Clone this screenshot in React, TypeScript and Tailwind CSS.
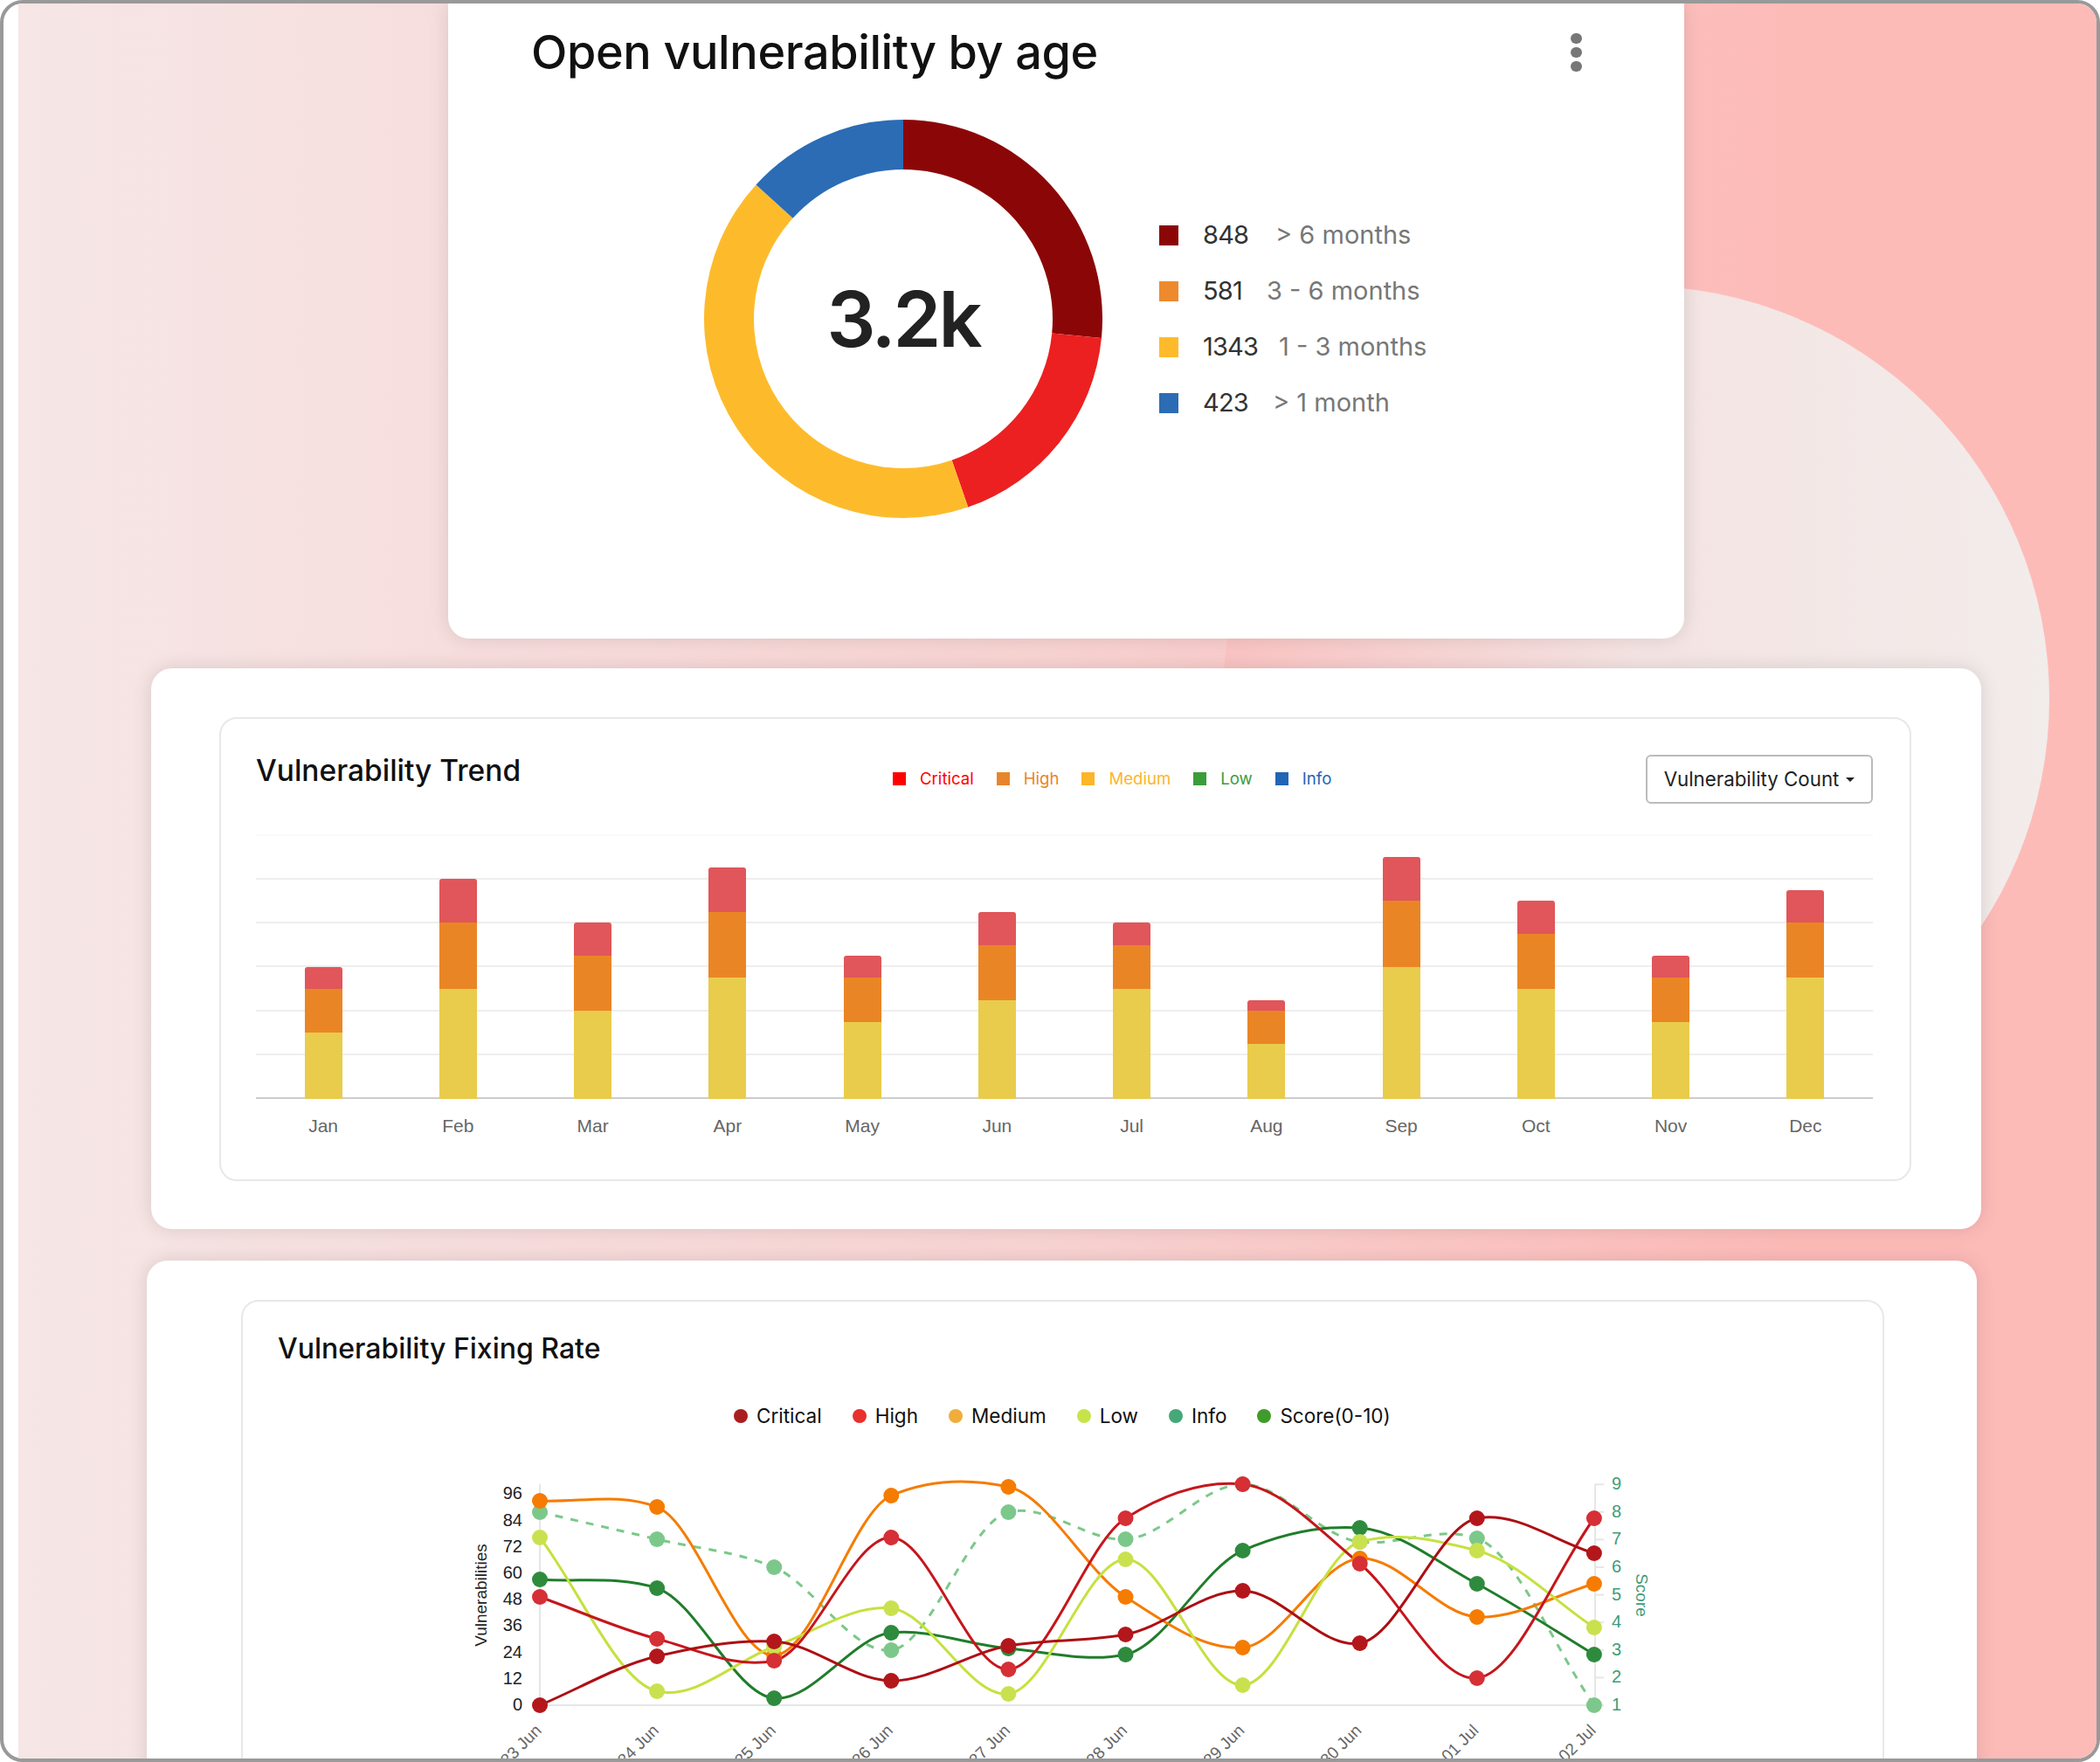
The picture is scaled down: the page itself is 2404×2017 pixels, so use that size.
const ageData = [
  { count: 848, label: "> 6 months", color: "#8b0707", swatch: "bg-[#8b0707]", countWidth: "w-[83px]" },
  { count: 581, label: "3 - 6 months", color: "#ec2020", swatch: "bg-[#ee8a2e]", countWidth: "w-[73px]" },
  { count: 1343, label: "1 - 3 months", color: "#fdbb2c", swatch: "bg-[#fdbb2c]", countWidth: "w-[87px]" },
  { count: 423, label: "> 1 month", color: "#2b6cb5", swatch: "bg-[#2b6cb5]", countWidth: "w-[80px]" },
];

const trendLegend = [
  { name: "Critical", swatch: "bg-[#ff0000]", text: "text-[#ff0000]" },
  { name: "High", swatch: "bg-[#e8852a]", text: "text-[#e8852a]" },
  { name: "Medium", swatch: "bg-[#fdb52a]", text: "text-[#fdb52a]" },
  { name: "Low", swatch: "bg-[#3a9d3a]", text: "text-[#3a9d3a]" },
  { name: "Info", swatch: "bg-[#2165b5]", text: "text-[#2165b5]" },
];

// yellow, orange, red stacked heights in half grid steps
const trendBars = [
  { month: "Jan", y: 3, o: 2, r: 1 },
  { month: "Feb", y: 5, o: 3, r: 2 },
  { month: "Mar", y: 4, o: 2.5, r: 1.5 },
  { month: "Apr", y: 5.5, o: 3, r: 2 },
  { month: "May", y: 3.5, o: 2, r: 1 },
  { month: "Jun", y: 4.5, o: 2.5, r: 1.5 },
  { month: "Jul", y: 5, o: 2, r: 1 },
  { month: "Aug", y: 2.5, o: 1.5, r: 0.5 },
  { month: "Sep", y: 6, o: 3, r: 2 },
  { month: "Oct", y: 5, o: 2.5, r: 1.5 },
  { month: "Nov", y: 3.5, o: 2, r: 1 },
  { month: "Dec", y: 5.5, o: 2.5, r: 1.5 },
];

const fixingLegend = [
  { name: "Critical", dot: "bg-[#a91f1f]" },
  { name: "High", dot: "bg-[#e8302c]" },
  { name: "Medium", dot: "bg-[#f0ad3c]" },
  { name: "Low", dot: "bg-[#c6e44a]" },
  { name: "Info", dot: "bg-[#45a878]" },
  { name: "Score(0-10)", dot: "bg-[#3f9b2a]" },
];

const days = ["23 Jun", "24 Jun", "25 Jun", "26 Jun", "27 Jun", "28 Jun", "29 Jun", "30 Jun", "01 Jul", "02 Jul"];
const dayX = days.map((_, i) => 618 + 134.1 * i);

// y positions are in page pixels, the svg viewBox below uses the same numbers
const series = [
  { line: "#7cc88a", dot: "#7cc88a", dashed: true, ys: [1729, 1760, 1792, 1887, 1729, 1760, 1697, 1763, 1759, 1950] },
  { line: "#1f7d2a", dot: "#2e8b3e", ys: [1806, 1816, 1942, 1867, 1885, 1892, 1773, 1747, 1811, 1892] },
  { line: "#f57c00", dot: "#f57c00", ys: [1716, 1723, 1893, 1710, 1700, 1826, 1884, 1782, 1849, 1811] },
  { line: "#c5e13f", dot: "#cae14f", ys: [1758, 1934, 1883, 1839, 1937, 1783, 1927, 1763, 1773, 1861] },
  { line: "#c5161c", dot: "#d62f36", ys: [1826, 1874, 1899, 1758, 1909, 1736, 1697, 1788, 1919, 1736] },
  { line: "#ad0f13", dot: "#b3171c", ys: [1950, 1894, 1877, 1922, 1882, 1869, 1819, 1879, 1736, 1776] },
];

function tangents(ys: number[]) {
  return ys.map((y, i) => {
    if (i === 0) return ys[1] - y;
    if (i === ys.length - 1) return y - ys[i - 1];
    const a = y - ys[i - 1];
    const b = ys[i + 1] - y;
    const mono = a * b <= 0 ? 0 : (2 * a * b) / (a + b);
    return 0.5 * ((a + b) / 2) + 0.5 * mono;
  });
}

function curve(ys: number[]) {
  const m = tangents(ys);
  const step = 134.1;
  let d = `M${dayX[0]} ${ys[0]}`;
  for (let i = 0; i < ys.length - 1; i++) {
    d += ` C${dayX[i] + step / 3} ${ys[i] + m[i] / 3} ${dayX[i + 1] - step / 3} ${ys[i + 1] - m[i + 1] / 3} ${dayX[i + 1]} ${ys[i + 1]}`;
  }
  return d;
}

function Donut() {
  const total = ageData.reduce((sum, d) => sum + d.count, 0);
  const point = (r: number, a: number) => {
    const rad = (a - 90) * (Math.PI / 180);
    return `${228 + r * Math.cos(rad)} ${228 + r * Math.sin(rad)}`;
  };
  let start = 0;
  return (
    <div className="relative h-[456px] w-[456px] shrink-0">
      <svg width="456" height="456" viewBox="0 0 456 456" className="block">
        {ageData.map((d) => {
          const end = start + (d.count / total) * 360;
          const large = end - start > 180 ? 1 : 0;
          const path = `M${point(228, start)} A228 228 0 ${large} 1 ${point(228, end)} L${point(171, end)} A171 171 0 ${large} 0 ${point(171, start)} Z`;
          start = end;
          return <path key={d.label} d={path} fill={d.color} />;
        })}
      </svg>
      <div className="absolute inset-0 flex items-center justify-center text-[88px] font-semibold tracking-[-3px] text-[#222]">
        3.2k
      </div>
    </div>
  );
}

function TrendChart() {
  const unit = 25.2;
  return (
    <div>
      <div className="relative mt-[35px] h-[303px]">
        <div className="absolute inset-0 flex flex-col justify-between">
          <div className="h-[2px] bg-[#f8f8f8]" />
          <div className="h-[2px] bg-[#eeeeee]" />
          <div className="h-[2px] bg-[#eeeeee]" />
          <div className="h-[2px] bg-[#eeeeee]" />
          <div className="h-[2px] bg-[#eeeeee]" />
          <div className="h-[2px] bg-[#eeeeee]" />
          <div className="h-[2px] bg-[#cccccc]" />
        </div>
        <div className="relative grid h-full grid-cols-12 items-end">
          {trendBars.map((b) => (
            <div key={b.month} className="mx-auto flex w-[43px] flex-col overflow-hidden rounded-t-[3px]">
              <div className="bg-[#e0565a]" style={{ height: b.r * unit }} />
              <div className="bg-[#ea8526]" style={{ height: b.o * unit }} />
              <div className="bg-[#e9cc4b]" style={{ height: b.y * unit }} />
            </div>
          ))}
        </div>
      </div>
      <div className="mt-[18px] grid grid-cols-12 font-['Liberation_Sans',sans-serif] text-[21px] leading-[26px] text-[#666]">
        {trendBars.map((b) => (
          <div key={b.month} className="text-center">
            {b.month}
          </div>
        ))}
      </div>
    </div>
  );
}

function FixingChart() {
  const leftTicks = [0, 12, 24, 36, 48, 60, 72, 84, 96];
  const rightTicks = [1, 2, 3, 4, 5, 6, 7, 8, 9];
  return (
    <svg width="1877" height="340" viewBox="278 1680 1877 340" className="mt-[41px] block font-['Liberation_Sans',sans-serif]">
      <line x1="618" y1="1697" x2="618" y2="1950" stroke="#e6e6e6" strokeWidth="2" />
      <line x1="618" y1="1950" x2="1826" y2="1950" stroke="#e6e6e6" strokeWidth="2" />
      <line x1="1826" y1="1697" x2="1826" y2="1950" stroke="#e6e6e6" strokeWidth="2" />
      {leftTicks.map((t, i) => (
        <text key={t} x="598" y={1950 - i * 30.2 + 6} textAnchor="end" fontSize="20" fill="#222">
          {t}
        </text>
      ))}
      {rightTicks.map((t, i) => (
        <g key={t}>
          <line x1="1826" y1={1950 - i * 31.6} x2="1836" y2={1950 - i * 31.6} stroke="#e6e6e6" strokeWidth="2" />
          <text x="1845" y={1950 - i * 31.6 + 6} fontSize="20" fill="#3f9c77">
            {t}
          </text>
        </g>
      ))}
      <text transform="translate(557 1824) rotate(-90)" textAnchor="middle" fontSize="19" fill="#222">
        Vulnerabilities
      </text>
      <text transform="translate(1873 1824) rotate(90)" textAnchor="middle" fontSize="19" fill="#3f9c77">
        Score
      </text>
      {days.map((d, i) => (
        <text key={d} transform={`translate(${dayX[i] + 3} 1980) rotate(-45)`} textAnchor="end" fontSize="19" fill="#666">
          {d}
        </text>
      ))}
      {series.map((s) => (
        <path
          key={s.line}
          d={curve(s.ys)}
          fill="none"
          stroke={s.line}
          strokeWidth={3}
          strokeDasharray={s.dashed ? "9 9" : undefined}
        />
      ))}
      {series.map((s) =>
        s.ys.map((y, i) => <circle key={`${s.line}-${i}`} cx={dayX[i]} cy={y} r="9" fill={s.dot} />)
      )}
    </svg>
  );
}

export default function App() {
  return (
    <div className="h-[2017px] w-[2404px] bg-white font-[Inter,sans-serif]">
      <div className="flex h-full w-full overflow-hidden rounded-[26px] border-4 border-[#999999] bg-white pl-[17px]">
        <div className="relative h-full flex-1 overflow-hidden bg-gradient-to-r from-[#f6e6e6] via-[#f8d3d2] via-50% to-[#fdbbb8] to-85%">
          {/* pale circle behind the cards */}
          <div className="absolute left-[1379px] top-[323px] h-[946px] w-[946px] rounded-full bg-gradient-to-r from-[#fac4c3] via-[#f4e4e3] to-[#f2ecea]" />

          <div className="relative ml-[492px] h-[727px] w-[1415px] rounded-b-[24px] bg-white shadow-[0_0_22px_rgba(0,0,0,0.12)]">
            <div className="flex items-center justify-between pl-[95px] pr-[117px] pt-[26px]">
              <h2 className="text-[54px] font-medium leading-[60px] tracking-[-0.4px] text-[#111]">Open vulnerability by age</h2>
              <div className="flex w-[13px] flex-col gap-[4px]">
                <div className="h-[12px] rounded-full bg-[#777]" />
                <div className="h-[12px] rounded-full bg-[#777]" />
                <div className="h-[12px] rounded-full bg-[#777]" />
              </div>
            </div>
            <div className="ml-[293px] mt-[47px] flex items-center">
              <Donut />
              <div className="ml-[65px] flex flex-col">
                {ageData.map((d) => (
                  <div key={d.label} className="flex h-[64px] items-center text-[29px]">
                    <span className={`h-[23px] w-[22px] ${d.swatch}`} />
                    <span className={`ml-[28px] tracking-[-0.8px] text-[#333] ${d.countWidth}`}>{d.count}</span>
                    <span className="text-[#777]">{d.label}</span>
                  </div>
                ))}
              </div>
            </div>
          </div>

          <div className="relative ml-[152px] mt-[34px] h-[642px] w-[2095px] rounded-[24px] bg-white pl-[78px] pr-[80px] pt-[56px] shadow-[0_0_22px_rgba(0,0,0,0.12)]">
            <div className="h-[531px] rounded-[20px] border-2 border-[#e8e8e8] pl-[40px] pr-[42px] pt-[41px]">
              <div className="flex h-[56px] items-start">
                <h3 className="mt-[1px] w-[729px] text-[33.5px] font-medium leading-[34px] text-[#111]">Vulnerability Trend</h3>
                <div className="flex h-[56px] items-center gap-[26px] text-[18.6px]">
                  {trendLegend.map((l) => (
                    <div key={l.name} className="flex items-center gap-[16px]">
                      <span className={`h-[15px] w-[15px] ${l.swatch}`} />
                      <span className={l.text}>{l.name}</span>
                    </div>
                  ))}
                </div>
                <button className="ml-auto flex h-[56px] w-[260px] items-center justify-center gap-[8px] rounded-[6px] border-2 border-[#bbbbbb] text-[22.3px] text-[#222]">
                  Vulnerability Count
                  <span className="h-0 w-0 border-x-[5px] border-t-[5px] border-x-transparent border-t-[#222]" />
                </button>
              </div>
              <TrendChart />
            </div>
          </div>

          <div className="relative ml-[147px] mt-[36px] h-[700px] w-[2095px] rounded-[24px] bg-white pl-[108px] pt-[45px] shadow-[0_0_22px_rgba(0,0,0,0.12)]">
            <div className="h-[600px] w-[1881px] rounded-[20px] border-2 border-[#e8e8e8]">
              <h3 className="ml-[40px] mt-[36px] text-[32px] font-medium leading-[36px] text-[#111]">Vulnerability Fixing Rate</h3>
              <div className="ml-[562px] mt-[39px] flex h-[40px] items-center gap-[35px] text-[22.5px] text-[#111]">
                {fixingLegend.map((l) => (
                  <div key={l.name} className="flex items-center gap-[10px]">
                    <span className={`h-[16px] w-[16px] rounded-full ${l.dot}`} />
                    <span>{l.name}</span>
                  </div>
                ))}
              </div>
              <FixingChart />
            </div>
          </div>
        </div>
      </div>
    </div>
  );
}
